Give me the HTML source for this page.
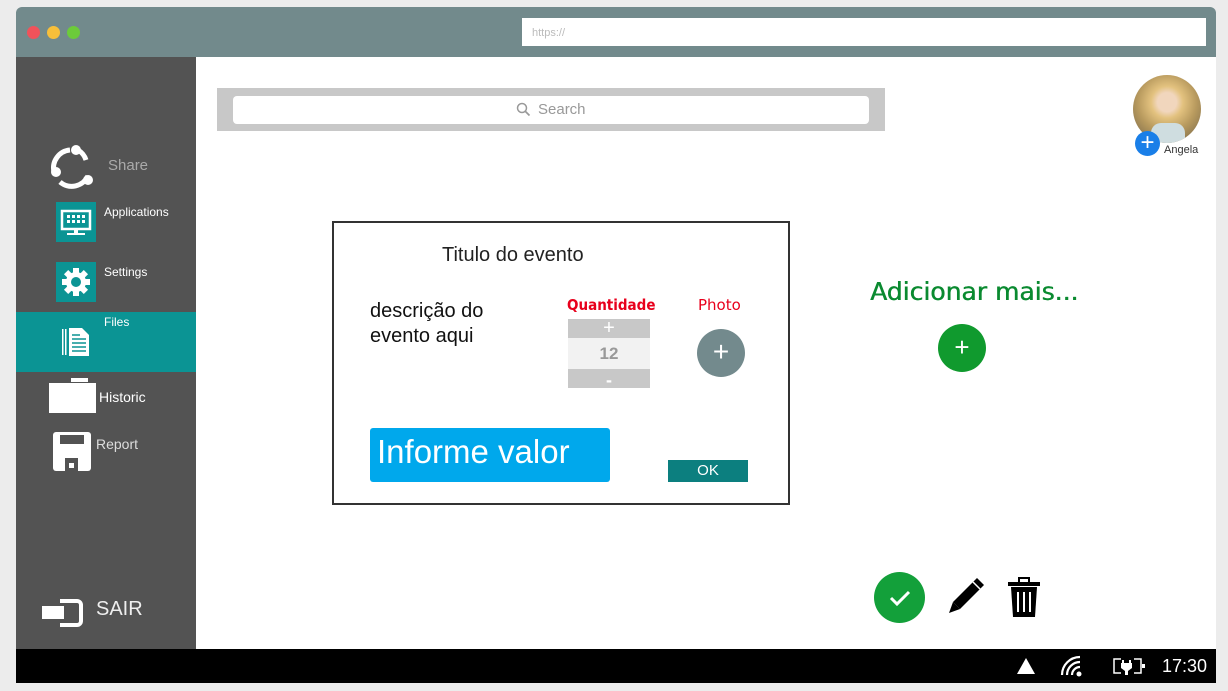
<!DOCTYPE html>
<html><head><meta charset="utf-8"><style>
*{margin:0;padding:0;box-sizing:border-box}
body{width:1228px;height:691px;background:#ececec;position:relative;overflow:hidden;font-family:"Liberation Sans",sans-serif}
.a{position:absolute}
</style></head><body>
<div class="a" style="left:16px;top:7px;width:1200px;height:50px;background:#728a8c;border-radius:6px 6px 0 0"></div>
<div class="a" style="left:27px;top:26px;width:13px;height:13px;border-radius:50%;background:#f0525a"></div>
<div class="a" style="left:47px;top:26px;width:13px;height:13px;border-radius:50%;background:#f7bf3a"></div>
<div class="a" style="left:67px;top:26px;width:13px;height:13px;border-radius:50%;background:#6ccb3a"></div>
<div class="a" style="left:522px;top:18px;width:684px;height:28px;background:#fff;font-size:11px;color:#bbb;padding:9px 0 0 10px">https://</div>
<div class="a" style="left:196px;top:57px;width:1020px;height:592px;background:#fff"></div>
<div class="a" style="left:16px;top:57px;width:180px;height:592px;background:#535353"></div>
<!-- sidebar -->
<svg class="a" style="left:48px;top:144px" width="50" height="46" viewBox="0 0 50 46"><path d="M22 6 A18 18 0 0 0 6 28 M12 38 A18 18 0 0 0 40 32 M38 16 A18 18 0 0 0 30 6" stroke="#fff" stroke-width="5" fill="none"/><circle cx="28" cy="6" r="5" fill="#fff"/><circle cx="8" cy="28" r="5" fill="#fff"/><circle cx="40" cy="36" r="5" fill="#fff"/></svg>
<div class="a" style="left:108px;top:157px;font-size:15px;color:#aaa">Share</div>
<div class="a" style="left:56px;top:202px;width:40px;height:40px;background:#0b9494"></div>
<svg class="a" style="left:56px;top:202px" width="40" height="40"><rect x="6" y="9" width="28" height="18" fill="none" stroke="#fff" stroke-width="2.5"/><g fill="#fff"><rect x="11" y="13" width="3" height="3"/><rect x="16" y="13" width="3" height="3"/><rect x="21" y="13" width="3" height="3"/><rect x="26" y="13" width="3" height="3"/><rect x="11" y="18" width="3" height="3"/><rect x="16" y="18" width="3" height="3"/><rect x="21" y="18" width="3" height="3"/><rect x="26" y="18" width="3" height="3"/><rect x="18" y="27" width="4" height="4"/><rect x="11" y="31" width="18" height="2"/></g></svg>
<div class="a" style="left:104px;top:205px;font-size:12px;color:#fff">Applications</div>
<div class="a" style="left:56px;top:262px;width:40px;height:40px;background:#0b9494"></div>
<svg class="a" style="left:56px;top:262px" width="40" height="40"><g fill="#fff" transform="translate(20 20)"><circle r="10"/><g id="t"><rect x="-3" y="-14" width="6" height="6"/></g><use href="#t" transform="rotate(45)"/><use href="#t" transform="rotate(90)"/><use href="#t" transform="rotate(135)"/><use href="#t" transform="rotate(180)"/><use href="#t" transform="rotate(225)"/><use href="#t" transform="rotate(270)"/><use href="#t" transform="rotate(315)"/></g><circle cx="20" cy="20" r="5" fill="#0b9494"/></svg>
<div class="a" style="left:104px;top:265px;font-size:12px;color:#fff">Settings</div>
<div class="a" style="left:16px;top:312px;width:180px;height:60px;background:#0b9494"></div>
<svg class="a" style="left:62px;top:327px" width="30" height="30"><rect x="0" y="2" width="1.5" height="26" fill="#fff"/><rect x="3" y="2" width="1.5" height="26" fill="#fff"/><path d="M7 1h13l7 7v21H7z" fill="#fff"/><g stroke="#0b9494" stroke-width="1.5"><path d="M10 12h14M10 16h14M10 20h14M10 24h14M10 8h8"/></g></svg>
<div class="a" style="left:104px;top:315px;font-size:12px;color:#fff">Files</div>
<svg class="a" style="left:49px;top:378px" width="47" height="35"><path d="M22 0h17v4H22z" fill="#fff"/><rect x="0" y="5" width="47" height="30" fill="#fff"/></svg>
<div class="a" style="left:99px;top:389px;font-size:14px;color:#fff">Historic</div>
<svg class="a" style="left:53px;top:432px" width="40" height="40"><rect width="38" height="39" rx="3" fill="#fff"/><rect x="7" y="3" width="24" height="9" fill="#535353"/><rect x="12" y="26" width="13" height="13" fill="#535353"/><rect x="16" y="31" width="5" height="5" fill="#fff"/></svg>
<div class="a" style="left:96px;top:436px;font-size:14px;color:#ddd">Report</div>
<svg class="a" style="left:40px;top:597px" width="44" height="32"><path d="M20 4h17a4 4 0 0 1 4 4v16a4 4 0 0 1-4 4H20" stroke="#fff" stroke-width="4" fill="none"/><rect x="2" y="9" width="22" height="13" fill="#fff"/></svg>
<div class="a" style="left:96px;top:598px;font-size:20px;color:#eee">SAIR</div>
<!-- search -->
<div class="a" style="left:217px;top:88px;width:668px;height:43px;background:#c8c8c8"></div>
<div class="a" style="left:233px;top:96px;width:636px;height:28px;background:#fff;border-radius:4px"></div>
<svg class="a" style="left:516px;top:102px" width="16" height="16"><circle cx="6" cy="6" r="4.5" stroke="#999" stroke-width="1.5" fill="none"/><path d="M9.5 9.5l4 4" stroke="#999" stroke-width="1.7"/></svg>
<div class="a" style="left:538px;top:101px;font-size:15px;color:#999">Search</div>
<!-- avatar -->
<div class="a" style="left:1133px;top:75px;width:68px;height:68px;border-radius:50%;background:radial-gradient(circle at 50% 40%,#f1d6bd 0 18%,#e3c27f 30%,#b89a5e 55%,#8d7850 80%);overflow:hidden"><div style="position:absolute;left:18px;top:48px;width:34px;height:22px;background:#cfdde0;border-radius:10px 10px 0 0"></div></div>
<div class="a" style="left:1135px;top:131px;width:25px;height:25px;border-radius:50%;background:#1a7fe8;color:#fff;font-size:24px;line-height:23px;text-align:center">+</div>
<div class="a" style="left:1164px;top:144px;font-size:11px;color:#333">Angela</div>
<!-- dialog -->
<div class="a" style="left:332px;top:221px;width:458px;height:284px;border:2px solid #333;background:#fff"></div>
<div class="a" style="left:442px;top:244px;font-size:20px;color:#222">Titulo do evento</div>
<div class="a" style="left:370px;top:299px;font-size:20px;color:#111;line-height:25px">descrição do<br>evento aqui</div>
<div class="a" style="left:567px;top:296px;font-size:15px;color:#e8001c;font-weight:bold;font-family:'DejaVu Sans',sans-serif;transform:scaleX(.9);transform-origin:left">Quantidade</div>
<div class="a" style="left:698px;top:296px;font-size:15px;color:#e8001c;font-family:'DejaVu Sans',sans-serif">Photo</div>
<div class="a" style="left:568px;top:319px;width:82px;height:19px;background:#c8c8c8;color:#fff;font-size:20px;line-height:18px;text-align:center">+</div>
<div class="a" style="left:568px;top:338px;width:82px;height:31px;background:#f2f2f2;color:#999;font-size:17px;line-height:31px;text-align:center;font-weight:bold">12</div>
<div class="a" style="left:568px;top:369px;width:82px;height:19px;background:#c8c8c8;color:#fff;font-size:18px;line-height:22px;text-align:center;font-weight:bold">-</div>
<div class="a" style="left:697px;top:329px;width:48px;height:48px;border-radius:50%;background:#738a8d;color:#fff;font-size:28px;line-height:46px;text-align:center">+</div>
<div class="a" style="left:370px;top:428px;width:240px;height:54px;background:#00a8ec;border-radius:3px;color:#fff;font-size:33px;padding:5px 0 0 7px">Informe valor</div>
<div class="a" style="left:668px;top:460px;width:80px;height:22px;background:#0c7f7f;color:#fff;font-size:15px;line-height:22px;text-align:center">OK</div>
<!-- right -->
<div class="a" style="left:870px;top:277px;font-size:25px;color:#0a8a30;font-family:'DejaVu Sans',sans-serif;text-shadow:0.5px 0 0 #0a8a30">Adicionar mais...</div>
<div class="a" style="left:938px;top:324px;width:48px;height:48px;border-radius:50%;background:#109a2e;color:#fff;font-size:26px;line-height:46px;text-align:center">+</div>
<div class="a" style="left:874px;top:572px;width:51px;height:51px;border-radius:50%;background:#13a03a"></div>
<svg class="a" style="left:874px;top:572px" width="51" height="51"><path d="M17 26l6 6 12-12" stroke="#fff" stroke-width="3" fill="none"/></svg>
<svg class="a" style="left:944px;top:576px" width="42" height="42"><path d="M33 2l7 7-24 24-7-7z" fill="#000"/><path d="M9 26l7 7-11 4z" fill="#000"/><path d="M29 6l7 7" stroke="#fff" stroke-width="1.5"/></svg>
<svg class="a" style="left:1007px;top:576px" width="34" height="42"><rect x="1" y="6" width="32" height="4" fill="#000"/><rect x="12" y="2" width="10" height="5" fill="none" stroke="#000" stroke-width="2"/><path d="M4 11h26l-2 30H6z" fill="#000"/><g stroke="#fff" stroke-width="2"><path d="M11 16v20M17 16v20M23 16v20"/></g></svg>
<!-- bottom bar -->
<div class="a" style="left:16px;top:649px;width:1200px;height:34px;background:#000"></div>
<svg class="a" style="left:1016px;top:657px" width="20" height="18"><path d="M10 1l9 16H1z" fill="#fff"/></svg>
<svg class="a" style="left:1060px;top:655px" width="24" height="22"><g stroke="#fff" stroke-width="2.2" fill="none"><path d="M2 20A18 18 0 0 1 20 2"/><path d="M7 20A13 13 0 0 1 20 7"/><path d="M12 20A8 8 0 0 1 20 12"/></g><circle cx="19" cy="19" r="2.5" fill="#fff"/></svg>
<svg class="a" style="left:1113px;top:656px" width="32" height="20"><path d="M8 3H1v14h7M21 3h7v14h-7" stroke="#fff" stroke-width="1.5" fill="none"/><rect x="29" y="8" width="3" height="4" fill="#fff"/><path d="M10 4v4M17 4v4" stroke="#fff" stroke-width="2"/><path d="M8 7h11v5l-4 3h-3l-4-3z" fill="#fff"/><rect x="12" y="14" width="3" height="5" fill="#fff"/></svg>
<div class="a" style="left:1162px;top:656px;font-size:18px;color:#fff">17:30</div>
</body></html>
